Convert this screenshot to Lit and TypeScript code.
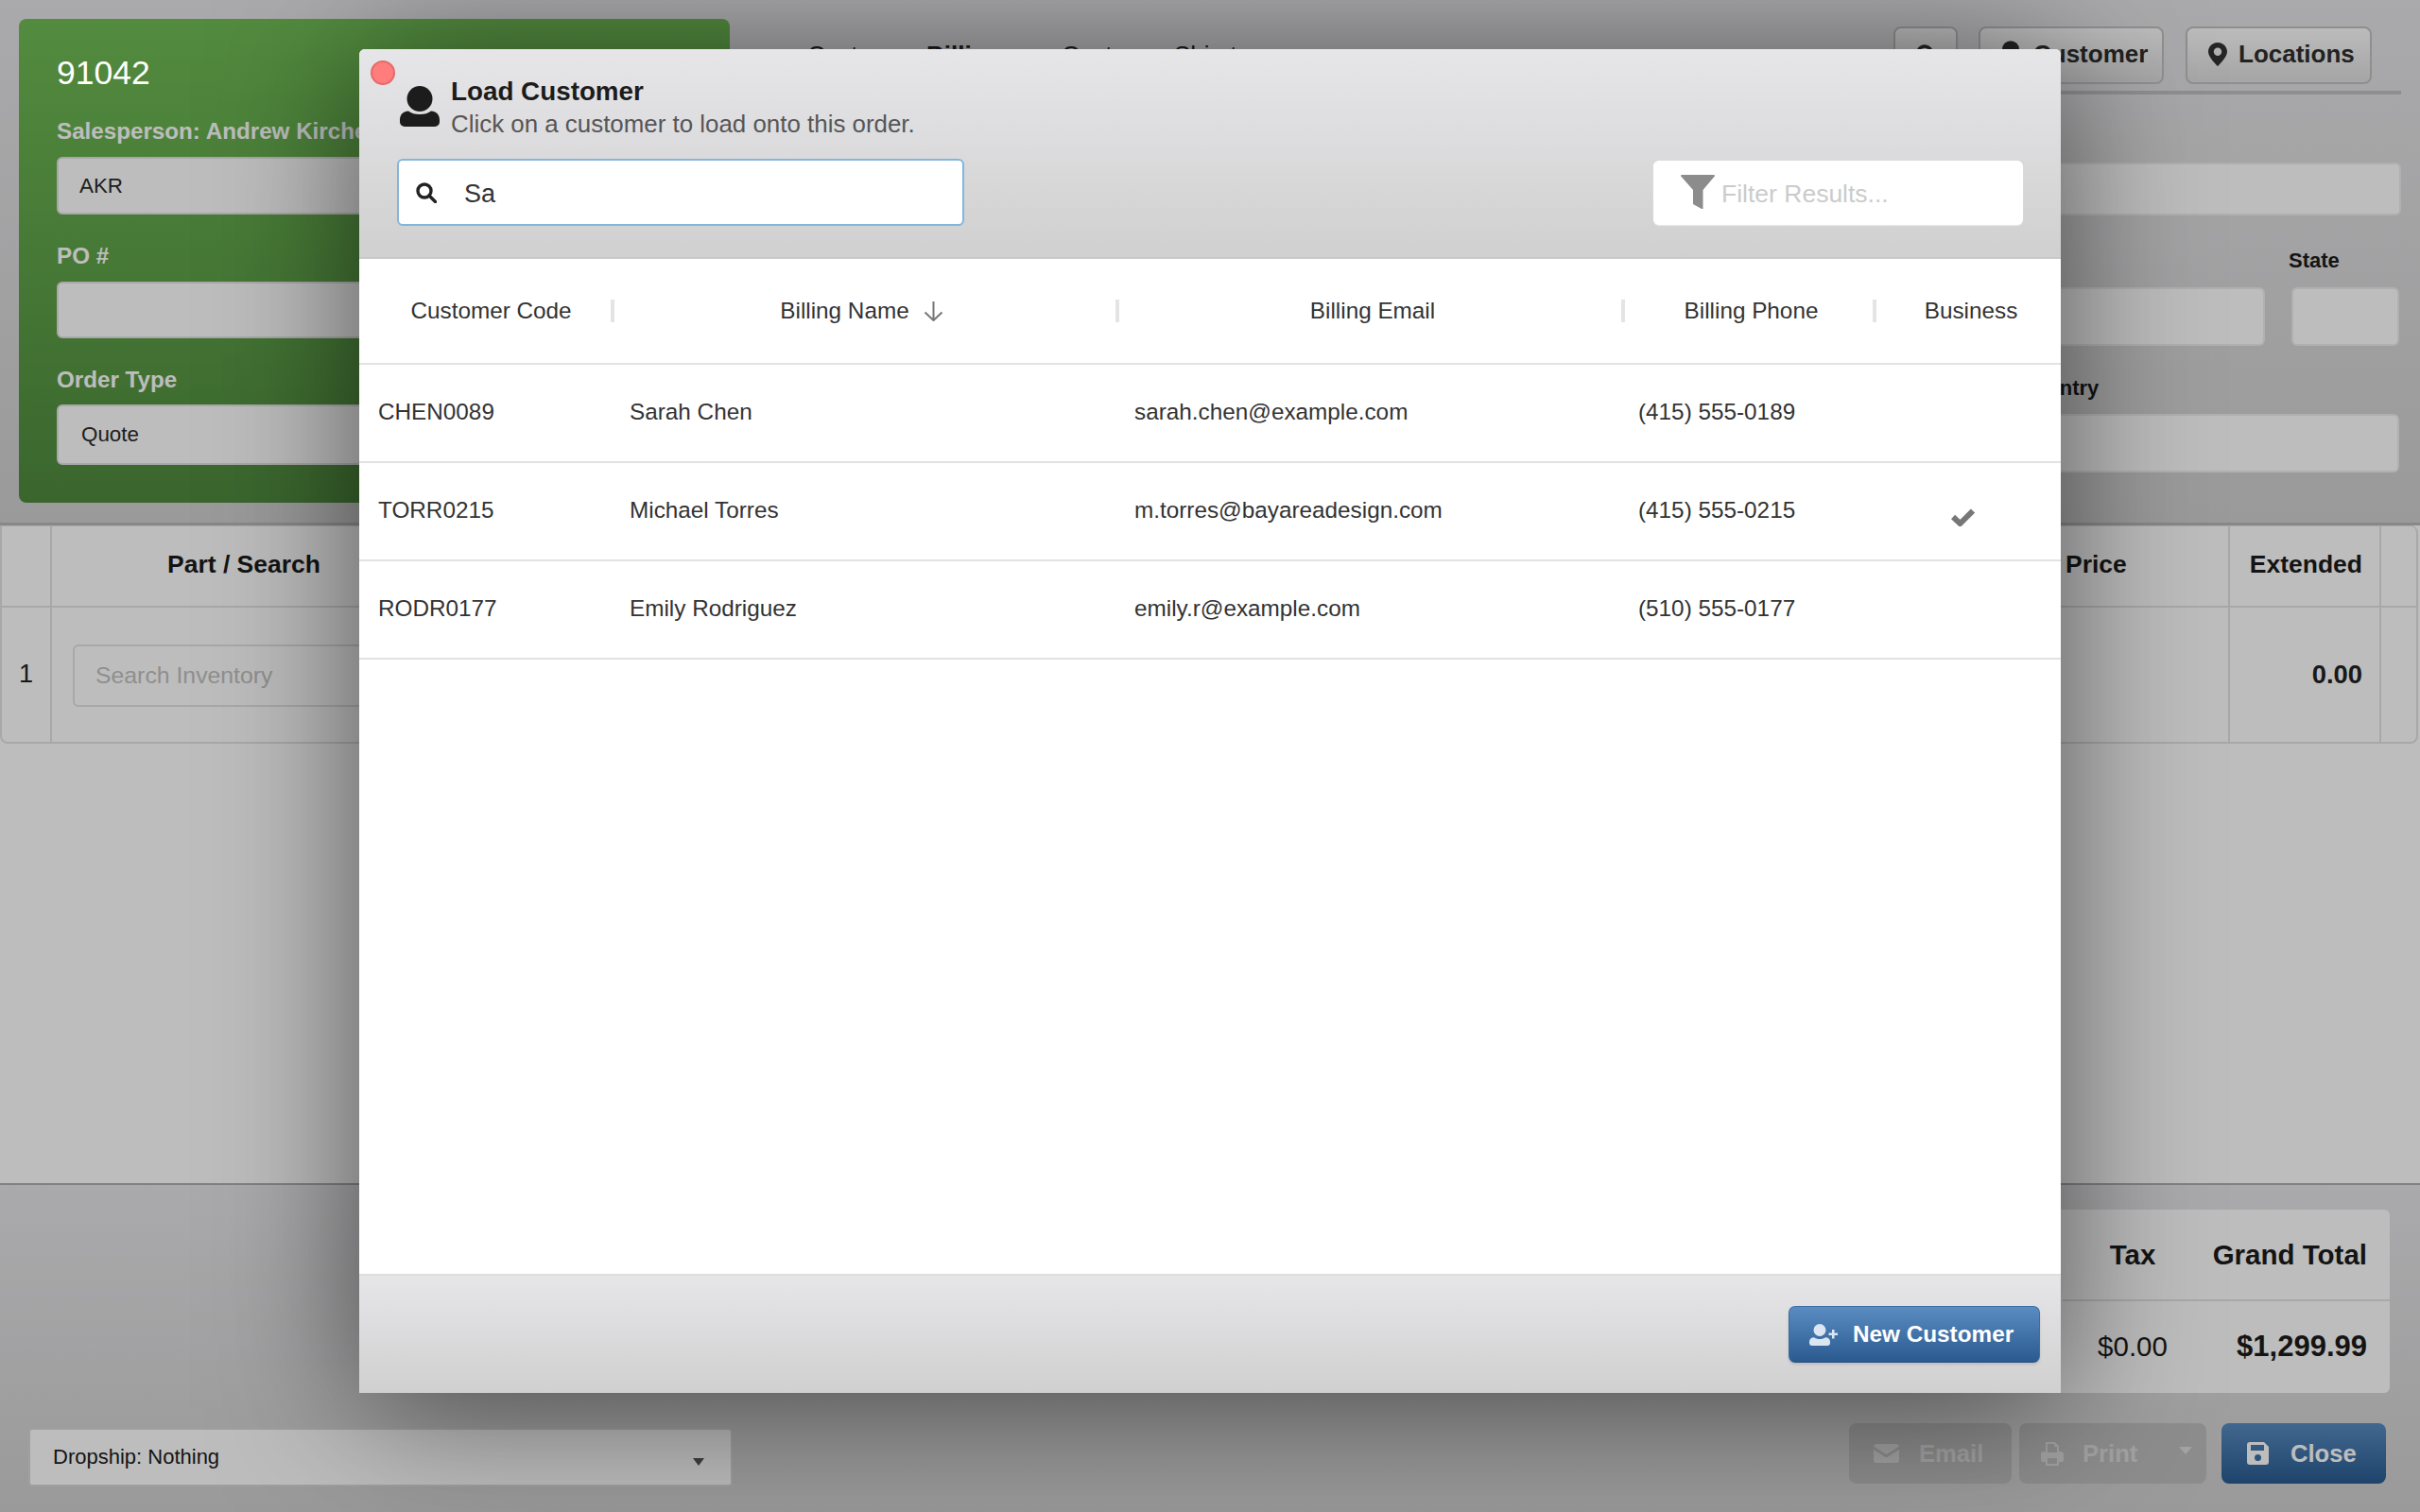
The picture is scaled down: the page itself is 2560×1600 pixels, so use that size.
import { LitElement, html, css, svg } from 'lit';
import { customElement } from 'lit/decorators.js';

const customers = [
  { code: 'CHEN0089', name: 'Sarah Chen', email: 'sarah.chen@example.com', phone: '(415) 555-0189', business: false },
  { code: 'TORR0215', name: 'Michael Torres', email: 'm.torres@bayareadesign.com', phone: '(415) 555-0215', business: true },
  { code: 'RODR0177', name: 'Emily Rodriguez', email: 'emily.r@example.com', phone: '(510) 555-0177', business: false },
];

const personPath = svg`<circle cx="21" cy="13.5" r="13.5"/><path d="M0 36c0-6 4-9.500 9-9.500 3 2.500 7 3.500 12 3.500s9-1 12-3.500c5 0 9 3.500 9 9.500v2a5 5 0 0 1-5 5H5a5 5 0 0 1-5-5z"/>`;
const pinPath = svg`<path fill-rule="evenodd" d="M10 0C4.500 0 0 4.300 0 9.700 0 16 10 25 10 25s10-9 10-15.300C20 4.300 15.500 0 10 0zm0 5.500a4.200 4.200 0 1 1 0 8.400 4.200 4.200 0 0 1 0-8.400z"/>`;

@customElement('app-root')
export class AppRoot extends LitElement {
  static styles = css`
    :host {
      display: block;
      position: relative;
      width: 2560px;
      height: 1600px;
      overflow: hidden;
      font-family: 'Liberation Sans', Arial, sans-serif;
      color: #222;
    }
    input {
      font-family: inherit;
      outline: none;
      box-sizing: border-box;
      min-width: 0;
    }
    svg { display: block; flex: none; }

    .page { display: flex; flex-direction: column; height: 1600px; background: #fff; }

    /* top band */
    .top {
      display: flex;
      height: 553px;
      background: linear-gradient(#e6e5e8, #d0d0d0);
    }
    .green {
      box-sizing: border-box;
      width: 752px;
      height: 512px;
      margin: 20px 0 0 20px;
      padding: 0 20px 0 40px;
      border-radius: 8px;
      background: linear-gradient(#70bc55, #4f8a3e);
      display: flex;
      flex-direction: column;
    }
    .order-no {
      position: relative;
      z-index: 3;
      margin-top: 37px;
      height: 40px;
      line-height: 40px;
      font-size: 35.500px;
      color: #fff;
    }
    .green label {
      font-size: 24.200px;
      font-weight: 700;
      line-height: 30px;
      color: #fff;
      white-space: nowrap;
    }
    .field {
      box-sizing: border-box;
      display: flex;
      align-items: center;
      background: #fff;
      border: 2px solid #e3e3e3;
      border-radius: 6px;
      font-size: 22.400px;
      color: #2a2a2a;
    }
    .l1 { margin-top: 27px; }
    .l2 { margin-top: 29px; }
    .l3 { margin-top: 29px; }
    .f1 { height: 61px; margin-top: 12px; padding-left: 22px; }
    .f2 { height: 60px; margin-top: 12px; }
    .f3 { height: 64px; margin-top: 11px; padding-left: 24px; }

    .right { flex: 1; padding: 28px 20px 0 20px; min-width: 0; }
    .nav {
      display: flex;
      align-items: center;
      height: 61px;
      padding-bottom: 7px;
      border-bottom: 4px solid #c0c0c0;
    }
    .tabs { display: flex; padding-left: 62px; font-size: 26px; flex: 1; white-space: nowrap; }
    .tab { width: 126px; }
    .tab.on { width: 143px; font-weight: 700; }
    .tab.w3 { width: 119px; }
    .nav-btn {
      box-sizing: border-box;
      height: 61px;
      display: flex;
      align-items: center;
      gap: 12px;
      padding: 0 18px 2px 22px;
      margin-left: 23px;
      border: 2px solid #c2c2c2;
      border-radius: 8px;
      background: linear-gradient(#fdfdfd, #dfdfdf);
      font-size: 26px;
      font-weight: 700;
      color: #2e2e2e;
    }
    .nav-btn.find { width: 68px; margin-left: 0; justify-content: center; padding: 0; }
    .nav-btn.cust { width: 196px; margin-left: 22px; padding-left: 18px; gap: 10px; }
    .nav-btn.loc { width: 197px; margin-right: 31px; }
    .form { display: flex; flex-direction: column; }
    .form .field { background: #fff; border-color: #eee; }
    .form label { font-size: 22px; font-weight: 700; line-height: 28px; white-space: nowrap; color: #1c1c1c; }
    .full { height: 56px; margin-top: 72px; }
    .form-row { display: flex; justify-content: flex-end; gap: 28px; margin-top: 34px; padding-right: 2px; }
    .form-col { display: flex; flex-direction: column; gap: 14px; }
    .form-col.wide { flex: 1; }
    .form-col.state { width: 114px; }
    .form-col.state label { margin-left: -3px; }
    .form-col .field { height: 62px; }
    .country { margin-top: 31px; padding-right: 2px; gap: 13px; display: flex; flex-direction: column; }
    .country label { margin-left: 1344px; }
    .country .field { height: 62px; }

    /* line items */
    .lines {
      flex: 1;
      border-top: 3px solid #b8b8b8;
      padding: 0 2px 0 0;
    }
    .grid {
      display: grid;
      grid-template-columns: 53px 408px 1fr 280px 160px 37px;
      grid-template-rows: 86px 144px;
      box-sizing: border-box;
      height: 231px;
      border: 2px solid #e3e3e3;
      border-top-width: 1px;
      border-radius: 0 8px 8px 8px;
    }
    .cell {
      display: flex;
      align-items: center;
      box-sizing: border-box;
      border-right: 2px solid #e3e3e3;
      border-bottom: 2px solid #e3e3e3;
      font-size: 26.500px;
      min-width: 0;
    }
    .cell.last { border-right: none; }
    .cell.bot { border-bottom: none; }
    .cell.hd { font-weight: 700; color: #1c1c1c; padding-bottom: 4px; }
    .cell.c { justify-content: center; }
    .cell.r { justify-content: flex-end; padding-right: 18px; }
    .cell.b { font-weight: 700; font-size: 27.400px; padding-bottom: 3px; }
    .cell.num { font-size: 27px; justify-content: center; padding-bottom: 4px; }
    .cell.p { padding-left: 22px; }
    .cell.price { padding-left: 106px; }
    .inv {
      height: 66px;
      width: 100%;
      margin-right: 20px;
      padding-left: 22px;
      border: 2px solid #e3e3e3;
      border-radius: 6px;
      font-size: 24.800px;
      color: #333;
      background: #fff;
    }
    .inv::placeholder { color: #c2c2c2; }

    /* bottom band */
    .bottom {
      height: 346px;
      border-top: 2px solid #adadad;
      background: linear-gradient(#e6e5e8, #d0d0d0);
      display: flex;
      flex-direction: column;
    }
    .card-row { display: flex; justify-content: flex-end; padding: 26px 32px 0 0; }
    .card {
      display: grid;
      grid-template-columns: 148px 198px;
      grid-template-rows: 95px 99px;
      width: 800px;
      justify-content: end;
      background: #fff;
      border-radius: 6px;
      font-size: 29.500px;
      color: #1c1c1c;
    }
    .card > div { display: flex; align-items: center; }
    .card .tax { justify-content: center; }
    .card .tot { justify-content: flex-end; padding-right: 24px; }
    .card .head { font-weight: 700; }
    .card .sum { border-top: 2px solid #e3e3e3; padding-bottom: 2px; }
    .card .gt { font-weight: 700; font-size: 31px; }
    .actions { display: flex; align-items: flex-start; padding: 32px 36px 0 30px; }
    .dropship {
      box-sizing: border-box;
      width: 745px;
      height: 62px;
      margin: 5px auto 0 0;
      padding: 0 28px 0 24px;
      display: flex;
      align-items: center;
      justify-content: space-between;
      background: #fff;
      border: 2px solid #d8d8d8;
      border-radius: 4px;
      font-size: 22px;
      color: #1c1c1c;
    }
    .caret { width: 0; height: 0; border-left: 6.500px solid transparent; border-right: 6.500px solid transparent; border-top: 8px solid #555; margin-top: 9px; }
    .act {
      box-sizing: border-box;
      height: 64px;
      display: flex;
      align-items: center;
      border-radius: 8px;
      font-size: 25.600px;
      font-weight: 700;
    }
    .act.off { background: #bfbfbf; color: #dcdcdc; }
    .act.off svg { fill: #dcdcdc; }
    .act.email { width: 172px; padding-left: 26px; gap: 21px; }
    .act.print { width: 198px; padding-left: 23px; gap: 20px; margin-left: 8px; }
    .act.print .caret { border-top-color: #dcdcdc; margin: 0 0 6px 24px; border-left-width: 7px; border-right-width: 7px; }
    .act.close {
      width: 174px;
      margin-left: 16px;
      padding-left: 27px;
      gap: 23px;
      color: #fff;
      background: linear-gradient(#5a8cc2, #2a5c92);
    }
    .act.close svg { fill: #fff; }

    /* overlay and dialog */
    .overlay {
      position: absolute;
      inset: 0;
      z-index: 2;
      background: rgba(0, 0, 0, 0.26);
    }
    .modal {
      position: absolute;
      z-index: 4;
      left: 380px;
      top: 52px;
      width: 1800px;
      height: 1422px;
      display: flex;
      flex-direction: column;
      background: #fff;
      border-radius: 6px 6px 0 0;
      box-shadow: 0 15px 150px rgba(0, 0, 0, 0.56);
      color: #333;
    }
    .m-head {
      box-sizing: border-box;
      position: relative;
      height: 222px;
      padding: 27px 40px 0 40px;
      border-radius: 6px 6px 0 0;
      border-bottom: 2px solid #c9c9c9;
      background: linear-gradient(#e6e5e8, #d0d0d0);
    }
    .dot {
      position: absolute;
      left: 12px;
      top: 12px;
      box-sizing: border-box;
      width: 26px;
      height: 26px;
      border-radius: 50%;
      background: #ff7d7d;
      border: 2px solid #e56a6a;
    }
    .m-title { display: flex; gap: 12px; height: 70px; padding-left: 3px; }
    .m-title svg { margin-top: 12px; fill: #1c1c1c; }
    .m-title h1 { margin: 0; font-size: 27.800px; line-height: 35px; font-weight: 700; color: #1c1c1c; }
    .m-title p { margin: 0; font-size: 25.900px; line-height: 35px; color: #565656; white-space: nowrap; }
    .m-search { display: flex; justify-content: space-between; align-items: center; margin-top: 19px; }
    .search {
      box-sizing: border-box;
      width: 600px;
      height: 71px;
      display: flex;
      align-items: center;
      gap: 29px;
      padding-left: 18px;
      background: #fff;
      border: 2px solid #82b6dc;
      border-radius: 6px;
    }
    .search input {
      flex: 1;
      border: none;
      background: none;
      padding: 4px 0 0;
      font-size: 27px;
      color: #333;
    }
    .filter {
      box-sizing: border-box;
      width: 391px;
      height: 68px;
      display: flex;
      align-items: center;
      gap: 7px;
      padding: 0 0 2px 29px;
      background: #fff;
      border-radius: 6px;
      box-shadow: 0 1px 1px rgba(255, 255, 255, 0.5);
    }
    .filter input {
      flex: 1;
      border: none;
      background: none;
      padding: 5px 0 0;
      font-size: 26.500px;
    }
    .filter input::placeholder { color: #cbcbcb; }

    .cols { display: grid; grid-template-columns: 270px 534px 535px 266px 1fr; }
    .thead { height: 112px; border-bottom: 2px solid #e2e2e2; box-sizing: border-box; font-size: 24.300px; }
    .th { display: flex; align-items: center; }
    .th .lab { flex: 1; display: flex; align-items: center; justify-content: center; gap: 15px; padding-left: 5px; }
    .th:first-child .lab { padding-left: 13px; }
    .th.sort .lab { padding-left: 0; padding-right: 7px; }
    .sep { width: 4px; height: 24px; background: #e4e4e4; flex: none; }
    .row {
      height: 104px;
      box-sizing: border-box;
      border-bottom: 2px solid #e2e2e2;
      font-size: 24.300px;
      align-items: center;
    }
    .row > div { padding: 0 0 3px 16px; white-space: nowrap; }
    .row > div:first-child { padding-left: 20px; }
    .row > div:nth-child(4) { padding-left: 14px; }
    .row .tick { padding: 12px 0 0 79px; }
    .m-body { flex: 1; }
    .m-foot {
      box-sizing: border-box;
      height: 126px;
      display: flex;
      justify-content: flex-end;
      padding: 32px 22px 0 0;
      border-top: 2px solid #dedede;
      background: linear-gradient(#e6e5e8, #d0d0d0);
    }
    .new {
      box-sizing: border-box;
      width: 266px;
      height: 60px;
      display: flex;
      align-items: center;
      gap: 15px;
      padding-left: 21px;
      border: 1px solid #3a6ea5;
      border-bottom-color: #255082;
      border-radius: 7px;
      background: linear-gradient(#5a8cc2, #2a5a8f);
      color: #fff;
      font-size: 24.300px;
      font-weight: 700;
      box-shadow: 0 2px 3px rgba(0, 0, 0, 0.12);
    }
    .new svg { fill: #dbe6f2; }
  `;

  render() {
    return html`
      <div class="page">
        <div class="top">
          <div class="green">
            <div class="order-no">91042</div>
            <label class="l1">Salesperson: Andrew Kircher</label>
            <div class="field f1">AKR</div>
            <label class="l2">PO #</label>
            <div class="field f2"></div>
            <label class="l3">Order Type</label>
            <div class="field f3">Quote</div>
          </div>
          <div class="right">
            <div class="nav">
              <div class="tabs">
                <span class="tab">Customer</span>
                <span class="tab on">Billing</span>
                <span class="tab w3">Custom</span>
                <span class="tab">Ship to</span>
              </div>
              <div class="nav-btn find">
                <svg width="22" height="24" viewBox="0 0 22 24" fill="none" stroke="#2e2e2e" stroke-width="3.500"><circle cx="10" cy="9.500" r="7.500"/><path d="M15 15l6 7" stroke-linecap="round"/></svg>
              </div>
              <div class="nav-btn cust">
                <svg width="28" height="29" viewBox="0 0 42 43" fill="#2e2e2e">${personPath}</svg>Customer
              </div>
              <div class="nav-btn loc">
                <svg width="20" height="25" viewBox="0 0 20 25" fill="#333">${pinPath}</svg>Locations
              </div>
            </div>
            <div class="form">
              <div class="field full"></div>
              <div class="form-row">
                <div class="form-col wide"><label>City</label><div class="field"></div></div>
                <div class="form-col state"><label>State</label><div class="field"></div></div>
              </div>
              <div class="country">
                <label>Country</label>
                <div class="field"></div>
              </div>
            </div>
          </div>
        </div>

        <div class="lines">
          <div class="grid">
            <div class="cell hd"></div>
            <div class="cell hd c">Part / Search</div>
            <div class="cell hd"></div>
            <div class="cell hd price">Price</div>
            <div class="cell hd r">Extended</div>
            <div class="cell last"></div>
            <div class="cell bot num">1</div>
            <div class="cell bot p"><input class="inv" placeholder="Search Inventory" /></div>
            <div class="cell bot"></div>
            <div class="cell bot"></div>
            <div class="cell bot r b">0.00</div>
            <div class="cell bot last"></div>
          </div>
        </div>

        <div class="bottom">
          <div class="card-row">
            <div class="card">
              <div class="tax head">Tax</div>
              <div class="tot head">Grand Total</div>
              <div class="tax sum">$0.00</div>
              <div class="tot sum gt">$1,299.99</div>
            </div>
          </div>
          <div class="actions">
            <div class="dropship">Dropship: Nothing<span class="caret"></span></div>
            <div class="act off email">
              <svg width="27" height="20" viewBox="0 0 27 20"><path d="M3 0h21a3 3 0 0 1 3 2.500L13.500 11 0 2.500A3 3 0 0 1 3 0z"/><path d="M0 6l13.500 8.500L27 6v11a3 3 0 0 1-3 3H3a3 3 0 0 1-3-3z"/></svg>Email
            </div>
            <div class="act off print">
              <svg width="24" height="25" viewBox="0 0 24 25"><path fill-rule="evenodd" d="M5 0h10l4 4v6h2a3 3 0 0 1 3 3v6a2 2 0 0 1-2 2h-3v4H5v-4H2a2 2 0 0 1-2-2v-6a3 3 0 0 1 3-3h2zm2 2v9h10V5h-3V2zM7 17v6h10v-6z"/></svg>Print<span class="caret"></span>
            </div>
            <div class="act close">
              <svg width="23" height="24" viewBox="0 0 23 24"><path fill-rule="evenodd" d="M3 0h15l5 5v16a3 3 0 0 1-3 3H3a3 3 0 0 1-3-3V3a3 3 0 0 1 3-3zm1 3v6h14V3zm7.500 10a3.500 3.500 0 1 0 0 7 3.500 3.500 0 0 0 0-7z"/></svg>Close
            </div>
          </div>
        </div>
      </div>

      <div class="overlay"></div>

      <div class="modal">
        <div class="m-head">
          <span class="dot"></span>
          <div class="m-title">
            <svg width="42" height="43" viewBox="0 0 42 43">${personPath}</svg>
            <div>
              <h1>Load Customer</h1>
              <p>Click on a customer to load onto this order.</p>
            </div>
          </div>
          <div class="m-search">
            <div class="search">
              <svg width="22" height="22" viewBox="0 0 22 22" fill="none" stroke="#222" stroke-width="3.400"><circle cx="9" cy="9" r="7"/><path d="M14 14l6.500 6.500" stroke-linecap="round"/></svg>
              <input .value=${'Sa'} />
            </div>
            <div class="filter">
              <svg width="36" height="36" viewBox="0 0 36 36" fill="#8c8c8c"><path d="M1 0h34a1 1 0 0 1 .8 1.600L23.500 16v19.500c0 .8-.8 1-1.500.5L13 31V16L.2 1.600A1 1 0 0 1 1 0z"/></svg>
              <input placeholder="Filter Results..." />
            </div>
          </div>
        </div>

        <div class="m-body">
          <div class="cols thead">
            <div class="th"><span class="lab">Customer Code</span><i class="sep"></i></div>
            <div class="th sort">
              <span class="lab">Billing Name
                <svg width="21" height="21" viewBox="0 0 21 21" fill="none" stroke="#777" stroke-width="2"><path d="M10.500 0v20M1.500 11.500l9 8.500 9-8.500"/></svg>
              </span><i class="sep"></i>
            </div>
            <div class="th"><span class="lab">Billing Email</span><i class="sep"></i></div>
            <div class="th"><span class="lab">Billing Phone</span><i class="sep"></i></div>
            <div class="th"><span class="lab">Business</span></div>
          </div>
          ${customers.map(
            (c) => html`
              <div class="cols row">
                <div>${c.code}</div>
                <div>${c.name}</div>
                <div>${c.email}</div>
                <div>${c.phone}</div>
                <div class="tick">
                  ${c.business
                    ? html`<svg width="25" height="19" viewBox="0 0 25 19" fill="none" stroke="#777" stroke-width="6"><path d="M2 9l7.500 7L23 2.500"/></svg>`
                    : ''}
                </div>
              </div>
            `,
          )}
        </div>

        <div class="m-foot">
          <div class="new">
            <svg width="31" height="23" viewBox="0 0 31 23"><circle cx="11" cy="6.500" r="6.500"/><path d="M0 19c0-3 2-4.800 5-4.800 1.500 1.200 3.500 1.800 6 1.800s4.500-.6 6-1.800c3 0 5 1.800 5 4.800v1a3 3 0 0 1-3 3H3a3 3 0 0 1-3-3z"/><path d="M24 6h2.500v3.500H30V12h-3.500v3.500H24V12h-3.500V9.500H24z"/></svg>
            New Customer
          </div>
        </div>
      </div>
    `;
  }
}
